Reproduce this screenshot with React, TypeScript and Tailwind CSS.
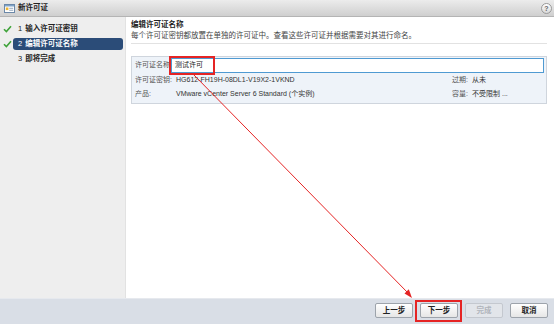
import React from "react";

const font = { fontFamily: '"Liberation Sans", "Noto Sans CJK SC", sans-serif' };

function Check() {
  return (
    <svg width="9" height="8" viewBox="0 0 9 8" className="shrink-0">
      <path d="M1 4.2 L3.4 6.6 L8 1.2" stroke="#3fa33a" strokeWidth="1.6" fill="none" />
    </svg>
  );
}

function Btn({ children, disabled }: { children: React.ReactNode; disabled?: boolean }) {
  return (
    <div
      className={
        "w-[38px] h-[15px] rounded-[2px] border flex items-center justify-center text-[7.5px] font-bold " +
        (disabled
          ? "border-[#c4c8cf] bg-[#e2e5ea] text-[#b0b4bb]"
          : "border-[#9da3ab] bg-gradient-to-b from-[#ffffff] to-[#e6e6e6] text-[#222]")
      }
    >
      {children}
    </div>
  );
}

export default function App() {
  return (
    <div className="relative w-[554px] h-[324px] overflow-hidden flex flex-col bg-white text-[#333]" style={font}>
      {/* title bar */}
      <div className="h-[17px] shrink-0 flex items-center bg-gradient-to-b from-[#ececec] to-[#cfcfcf] border-b border-[#b4b4b4] pl-[4px] pr-[2px]">
        <svg width="11" height="9" viewBox="0 0 11 9" className="shrink-0">
          <rect x="0.5" y="0.5" width="10" height="8" fill="#fff" stroke="#6b88a8" />
          <rect x="1" y="1" width="9" height="1.5" fill="#7fa3c8" />
          <rect x="1.8" y="3.5" width="2.6" height="2.6" fill="#f0b630" />
          <rect x="5.2" y="3.8" width="4" height="0.9" fill="#8aa0b8" />
          <rect x="5.2" y="5.8" width="4" height="0.9" fill="#8aa0b8" />
        </svg>
        <span className="ml-[3px] text-[7.5px] font-bold text-[#222]">新许可证</span>
        <div className="ml-auto w-[11px] h-[11px] rounded-full border border-[#9a9a9a] bg-gradient-to-b from-[#ffffff] to-[#d8d8d8] flex items-center justify-center text-[7px] font-bold text-[#666] leading-none">
          ?
        </div>
      </div>

      {/* main */}
      <div className="flex-1 flex min-h-0">
        {/* left steps */}
        <div className="w-[126px] shrink-0 bg-[#eeeeee] border-r border-[#e2e2e2] pt-[6px] flex flex-col gap-[3px] text-[7.5px]">
          <div className="flex items-center h-[12px] pl-[3px]">
            <Check />
            <div className="ml-[1px] w-[110px] h-[12px] flex items-center pl-[5px] text-[#222]">
              <span className="mr-[3px]">1</span>
              <span className="font-bold">输入许可证密钥</span>
            </div>
          </div>
          <div className="flex items-center h-[12px] pl-[3px]">
            <Check />
            <div className="ml-[1px] w-[110px] h-[12px] flex items-center pl-[5px] rounded-[3px] bg-[#2b4c78] text-white">
              <span className="mr-[3px]">2</span>
              <span className="font-bold">编辑许可证名称</span>
            </div>
          </div>
          <div className="flex items-center h-[12px] pl-[3px]">
            <div className="w-[9px]" />
            <div className="ml-[1px] w-[110px] h-[12px] flex items-center pl-[5px] text-[#222]">
              <span className="mr-[3px]">3</span>
              <span className="font-bold">即将完成</span>
            </div>
          </div>
        </div>

        {/* right content */}
        <div className="flex-1 bg-white pl-[5px] pr-[7px] pt-[3px]">
          <div className="text-[7.5px] font-bold text-[#222] leading-[10px]">编辑许可证名称</div>
          <div className="text-[7.5px] text-[#444] leading-[10px] mt-[1px] whitespace-nowrap">
            每个许可证密钥都放置在单独的许可证中。查看这些许可证并根据需要对其进行命名。
          </div>
          <div className="h-px bg-[#e2e2e2] mt-[2px]" />

          <div className="mt-[12px] border border-[#cfd5dd] bg-[#eef3f9] pl-[3px] pr-[2px] pt-[0px] pb-[2px] text-[7px] whitespace-nowrap">
            <div className="flex items-center h-[16px]">
              <span className="w-[36px] shrink-0 text-[#555]">许可证名称:</span>
              <div className="relative flex-1 h-[15px] bg-white border-[1.5px] border-[#4f9ad2] flex items-center pl-[3px] text-[#222]">
                测试许可
                <div className="absolute left-[-3px] top-[-3px] w-[46px] h-[19px] border-2 border-[#e52424]" />
              </div>
            </div>
            <div className="flex items-center h-[14px]">
              <span className="w-[41px] shrink-0 text-[#555]">许可证密钥:</span>
              <span className="flex-1 text-[#333]">HG612-FH19H-08DL1-V19X2-1VKND</span>
              <span className="w-[20px] text-[#555]">过期:</span>
              <span className="w-[72px] text-[#333]">从未</span>
            </div>
            <div className="flex items-center h-[14px]">
              <span className="w-[41px] shrink-0 text-[#555]">产品:</span>
              <span className="flex-1 text-[#333]">VMware vCenter Server 6 Standard (个实例)</span>
              <span className="w-[20px] text-[#555]">容量:</span>
              <span className="w-[72px] text-[#333]">不受限制 ...</span>
            </div>
          </div>
        </div>
      </div>

      {/* footer */}
      <div className="h-[26px] shrink-0 bg-[#d9dee6] border-t border-[#e6e9ee] flex items-start justify-end pt-[4px] pr-[6px] gap-[7px]">
        <Btn>上一步</Btn>
        <div className="relative">
          <Btn>下一步</Btn>
          <div className="absolute left-[-5px] top-[-3px] w-[47px] h-[22px] border-2 border-[#e52424]" />
        </div>
        <Btn disabled>完成</Btn>
        <Btn>取消</Btn>
      </div>

      {/* red arrow overlay */}
      <svg className="absolute left-0 top-0 pointer-events-none" width="554" height="324" viewBox="0 0 554 324">
        <line x1="192" y1="73" x2="409" y2="294" stroke="#e52424" strokeWidth="1" />
        <path d="M412 298 L404.5 293.5 L408.8 289.3 Z" fill="#e52424" />
      </svg>
    </div>
  );
}
